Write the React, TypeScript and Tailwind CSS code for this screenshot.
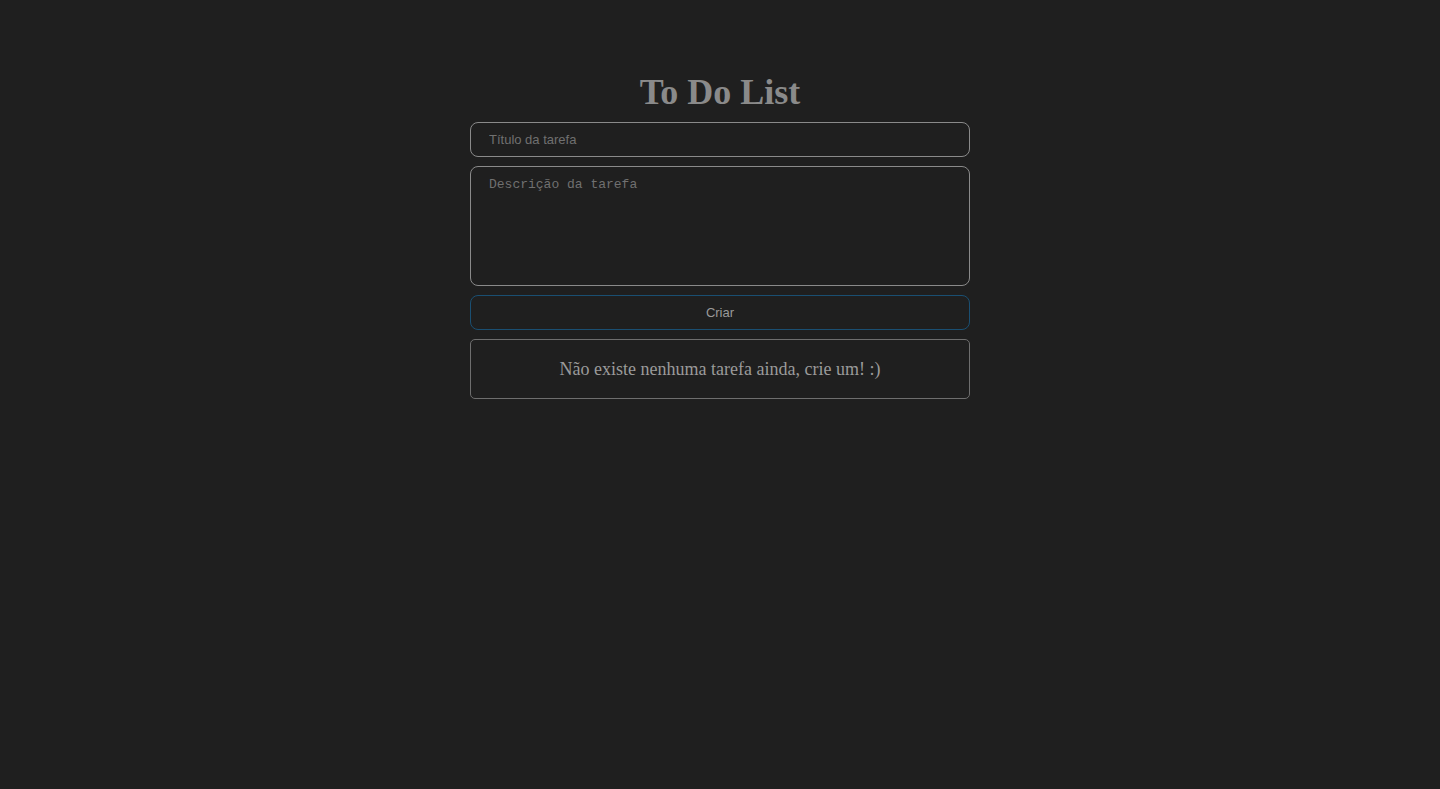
import React, { useState } from "react";

const App: React.FC = () => {
  const [title, setTitle] = useState("");
  const [desc, setDesc] = useState("");

  return (
    <div className="min-h-screen w-full bg-[#1f1f1f] flex flex-col items-center pt-[70px]">
      <h1 className="text-[36px] leading-[44px] font-bold text-[#8a8a8a] font-['Liberation_Serif',serif]">
        To Do List
      </h1>
      <div className="w-[500px] flex flex-col gap-[9px] mt-[8px]">
        <input
          value={title}
          onChange={(e) => setTitle(e.target.value)}
          placeholder="Título da tarefa"
          className="h-[35px] w-full rounded-[8px] border border-[#8a8a8a] bg-transparent px-[18px] text-[13px] text-[#aaaaaa] placeholder:text-[#707070] outline-none font-['Liberation_Sans',sans-serif]"
        />
        <textarea
          value={desc}
          onChange={(e) => setDesc(e.target.value)}
          placeholder="Descrição da tarefa"
          className="h-[120px] w-full resize-none rounded-[8px] border border-[#8a8a8a] bg-transparent px-[18px] pt-[8px] pb-[9px] text-[13px] text-[#aaaaaa] placeholder:text-[#707070] outline-none font-['Liberation_Mono',monospace]"
        />
        <button className="h-[35px] w-full rounded-[8px] border border-[#1a4f72] bg-transparent text-[13px] text-[#9a9a9a] font-['Liberation_Sans',sans-serif]">
          Criar
        </button>
        <div className="h-[60px] w-full rounded-[5px] border border-[#6e6e6e] flex items-center justify-center">
          <span className="text-[18px] text-[#9a9a9a] font-['Liberation_Serif',serif]">
            Não existe nenhuma tarefa ainda, crie um! :)
          </span>
        </div>
      </div>
    </div>
  );
};

export default App;
